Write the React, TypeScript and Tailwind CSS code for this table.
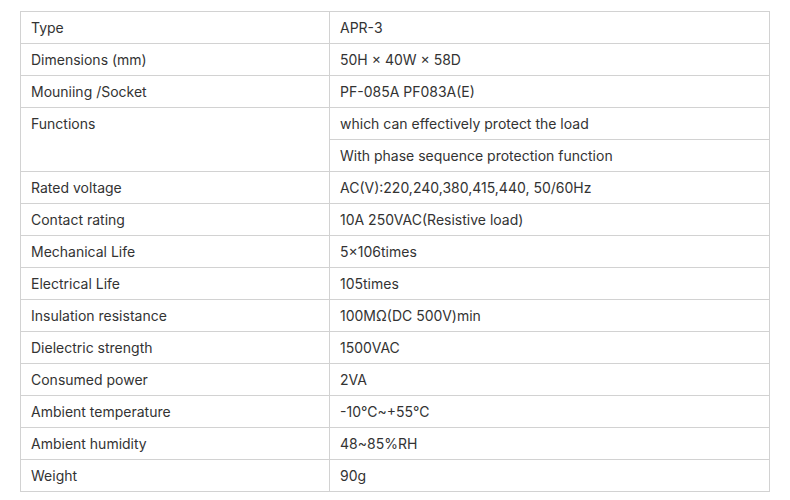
const rows: [string, string][] = [
  ['Type', 'APR-3'],
  ['Dimensions (mm)', '50H × 40W × 58D'],
  ['Mouniing /Socket', 'PF-085A PF083A(E)'],
]

const rest: [string, string][] = [
  ['Rated voltage', 'AC(V):220,240,380,415,440, 50/60Hz'],
  ['Contact rating', '10A 250VAC(Resistive load)'],
  ['Mechanical Life', '5×106times'],
  ['Electrical Life', '105times'],
  ['Insulation resistance', '100MΩ(DC 500V)min'],
  ['Dielectric strength', '1500VAC'],
  ['Consumed power', '2VA'],
  ['Ambient temperature', '-10℃~+55℃'],
  ['Ambient humidity', '48~85%RH'],
  ['Weight', '90g'],
]

const cell = 'border border-[#d2d2d2] px-[10px] py-0 h-[32px] align-middle leading-[20px]'

export default function App() {
  return (
    <div className="w-[790px] h-[500px] bg-white pt-[11px] pl-[20px] font-['Inter',sans-serif] text-[14px] text-[#333]">
      <table className="w-[750px] border-collapse table-fixed">
        <colgroup>
          <col className="w-[309px]" />
          <col />
        </colgroup>
        <tbody>
          {rows.map(([k, v]) => (
            <tr key={k}>
              <td className={cell}>{k}</td>
              <td className={cell}>{v}</td>
            </tr>
          ))}
          {/* Functions spans two value rows */}
          <tr>
            <td rowSpan={2} className="border border-[#d2d2d2] px-[10px] pt-[6px] align-top leading-[20px]">
              Functions
            </td>
            <td className={cell}>which can effectively protect the load</td>
          </tr>
          <tr>
            <td className={cell}>With phase sequence protection function</td>
          </tr>
          {rest.map(([k, v]) => (
            <tr key={k}>
              <td className={cell}>{k}</td>
              <td className={cell}>{v}</td>
            </tr>
          ))}
        </tbody>
      </table>
    </div>
  )
}
